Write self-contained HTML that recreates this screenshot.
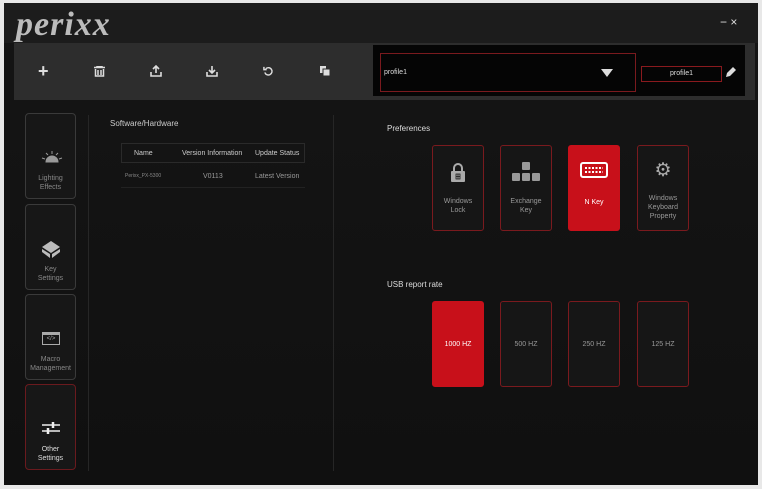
<!DOCTYPE html>
<html><head><style>
*{margin:0;padding:0;box-sizing:border-box}
body{width:762px;height:489px;background:#e8e8e8;font-family:"Liberation Sans",sans-serif;position:relative;overflow:hidden}
.win{position:absolute;left:4px;top:3px;width:754px;height:482px;background:linear-gradient(#151515,#101010)}
.title{position:absolute;left:0;top:0;width:754px;height:40px;background:#1c1c1c}
.logo{position:absolute;left:12px;top:3px;font:italic bold 34px "Liberation Serif",serif;color:#bcbcbc;letter-spacing:1px}
.tb{position:absolute;left:10px;top:40px;width:741px;height:57px;background:#2d2d2d}
.ic{position:absolute;color:#ddd;font-size:14px}
.prof{position:absolute;left:359px;top:2px;width:372px;height:51px;background:#050505}
.abs{position:absolute}
.t{color:#ddd;font-size:7px;text-align:center}
.side{position:absolute;left:21px;width:51px;height:86px;border:1px solid #3a3a3a;border-radius:4px;background:#171717}
.side .l{position:absolute;top:60px;width:100%;text-align:center;color:#888;font-size:7px;line-height:9px}
.side svg{position:absolute;left:15px;top:35px}
.tile{position:absolute;width:52px;height:86px;border:1px solid #7a1a1e;border-radius:3px;background:#161616;color:#999;font-size:7px;text-align:center;line-height:9px}
.tile svg{display:block;margin:16px auto 0}
.red{background:#c8101a;border-color:#c8101a;color:#fff}
</style></head><body>
<div class="win">
<div class="title"><div class="logo">perixx</div>
<div class="abs" style="left:716px;top:12px;color:#ddd;font-size:12px">−&nbsp;×</div></div>
<div class="tb">
<div class="ic" style="left:24px;top:18px;font-size:18px;font-weight:bold">+</div>
<svg class="abs" style="left:80px;top:23px" width="11" height="11" viewBox="0 0 11 11" fill="none" stroke="#ddd" stroke-width="1.5"><path d="M0 1.5h11M3 1V0h5v1M1.5 3v7h8V3M4 4v5M7 4v5"/></svg>
<svg class="abs" style="left:136px;top:22px" width="12" height="12" viewBox="0 0 12 12" fill="none" stroke="#ddd" stroke-width="1.6"><path d="M6 8V1M3 4l3-3 3 3M1 7v4h10V7"/></svg>
<svg class="abs" style="left:192px;top:22px" width="12" height="12" viewBox="0 0 12 12" fill="none" stroke="#ddd" stroke-width="1.6"><path d="M6 1v7M3 5l3 3 3-3M1 7v4h10V7"/></svg>
<svg class="abs" style="left:249px;top:23px" width="11" height="11" viewBox="0 0 12 12" fill="none" stroke="#ddd" stroke-width="1.6"><path d="M3 3A4 4 0 1 1 2 7M1 1v3h3"/></svg>
<svg class="abs" style="left:306px;top:23px" width="10" height="10" viewBox="0 0 10 10" fill="#ddd"><rect x="0" y="0" width="6" height="7"/><rect x="3" y="3" width="7" height="7" stroke="#2d2d2d"/></svg>
<div class="prof">
<div class="abs" style="left:7px;top:8px;width:256px;height:39px;border:1px solid #7a1a1e"></div>
<div class="abs" style="left:11px;top:24px;color:#ddd;font-size:7px">profile1</div>
<div class="abs" style="left:228px;top:24px;width:0;height:0;border-left:6px solid transparent;border-right:6px solid transparent;border-top:8px solid #ddd"></div>
<div class="abs t" style="left:268px;top:21px;width:81px;height:16px;border:1px solid #8a1a1e;line-height:14px">profile1</div>
<svg class="abs" style="left:353px;top:22px" width="10" height="10" viewBox="0 0 10 10" fill="#ddd"><path d="M7 0l3 3-6 6-4 1 1-4z"/></svg>
</div></div>
<div class="abs" style="left:84px;top:112px;width:1px;height:356px;background:#262626"></div>
<div class="abs" style="left:329px;top:112px;width:1px;height:356px;background:#262626"></div>
<div class="side" style="top:110px"><svg width="22" height="14" viewBox="0 0 22 14" fill="#999" stroke="#999"><path d="M5 13a6 6 0 0 1 12 0z"/><path d="M11 2v3M5 4l2 2M17 4l-2 2M1 9l3 1M21 9l-3 1" fill="none"/></svg><div class="l">Lighting<br>Effects</div></div>
<div class="side" style="top:201px"><svg width="20" height="18" viewBox="0 0 20 18" fill="#bbb"><path d="M10 1l9 6-9 6-9-6z"/><path d="M1 9l8 5v4L1 12zM19 9l-8 5v4l8-6z"/></svg><div class="l">Key<br>Settings</div></div>
<div class="side" style="top:291px"><div class="abs" style="left:16px;top:37px;width:18px;height:13px;border:1px solid #aaa;border-top:3px solid #aaa;color:#aaa;font-size:6px;text-align:center;line-height:8px">&lt;/&gt;</div><div class="l">Macro<br>Management</div></div>
<div class="side" style="top:381px;border-color:#6a1a1e"><svg width="20" height="16" viewBox="0 0 20 16" stroke="#eee" stroke-width="1.6" fill="none"><path d="M1 5h18M1 11h18"/><path d="M12 2v6M7 8v6" stroke-width="2.5"/></svg><div class="l" style="color:#ddd">Other<br>Settings</div></div>
<div class="abs" style="left:106px;top:116px;color:#ccc;font-size:8px">Software/Hardware</div>
<div class="abs" style="left:117px;top:140px;width:184px;height:20px;border:1px solid #2a2a2a;background:#141414"></div>
<div class="abs" style="left:130px;top:147px;color:#ccc;font-size:7px">Name</div>
<div class="abs" style="left:178px;top:147px;color:#ccc;font-size:7px">Version Information</div>
<div class="abs" style="left:251px;top:147px;color:#ccc;font-size:7px">Update Status</div>
<div class="abs" style="left:121px;top:170px;color:#888;font-size:5px">Perixx_PX-5300</div>
<div class="abs" style="left:199px;top:170px;color:#999;font-size:7px">V0113</div>
<div class="abs" style="left:251px;top:170px;color:#999;font-size:7px">Latest Version</div>
<div class="abs" style="left:117px;top:184px;width:184px;height:1px;background:#222"></div>
<div class="abs" style="left:383px;top:121px;color:#ddd;font-size:8px">Preferences</div>
<div class="tile" style="left:428px;top:142px"><svg width="16" height="20" viewBox="0 0 16 20"><path d="M4 9V6a4 4 0 0 1 8 0v3" stroke="#aaa" stroke-width="2" fill="none"/><rect x="1" y="9" width="14" height="11" rx="1" fill="#aaa"/><path d="M6 12h4v5H6zM8 12v5M6 14.5h4" stroke="#161616" stroke-width="0.8" fill="none"/></svg><div style="margin-top:15px">Windows<br>Lock</div></div>
<div class="tile" style="left:496px;top:142px"><svg width="30" height="20" viewBox="0 0 30 20" fill="#999"><rect x="11" y="0" width="8" height="8" rx="1"/><rect x="1" y="11" width="8" height="8" rx="1"/><rect x="11" y="11" width="8" height="8" rx="1"/><rect x="21" y="11" width="8" height="8" rx="1"/></svg><div style="margin-top:15px">Exchange<br>Key</div></div>
<div class="tile red" style="left:564px;top:142px"><svg width="28" height="16" viewBox="0 0 28 16" fill="none" stroke="#fff" stroke-width="2"><rect x="1" y="1" width="26" height="14" rx="2"/><path d="M5 6h18M5 10h18" stroke-dasharray="2 1.5"/></svg><div style="margin-top:20px">N Key</div></div>
<div class="tile" style="left:633px;top:142px"><div style="margin-top:15px;font-size:19px;color:#aaa;line-height:20px">⚙</div><div style="margin-top:13px">Windows<br>Keyboard<br>Property</div></div>
<div class="abs" style="left:383px;top:277px;color:#ddd;font-size:8px">USB report rate</div>
<div class="tile red" style="left:428px;top:298px;line-height:86px">1000 HZ</div>
<div class="tile" style="left:496px;top:298px;line-height:86px">500 HZ</div>
<div class="tile" style="left:564px;top:298px;line-height:86px">250 HZ</div>
<div class="tile" style="left:633px;top:298px;line-height:86px">125 HZ</div>
</div>
</body></html>
